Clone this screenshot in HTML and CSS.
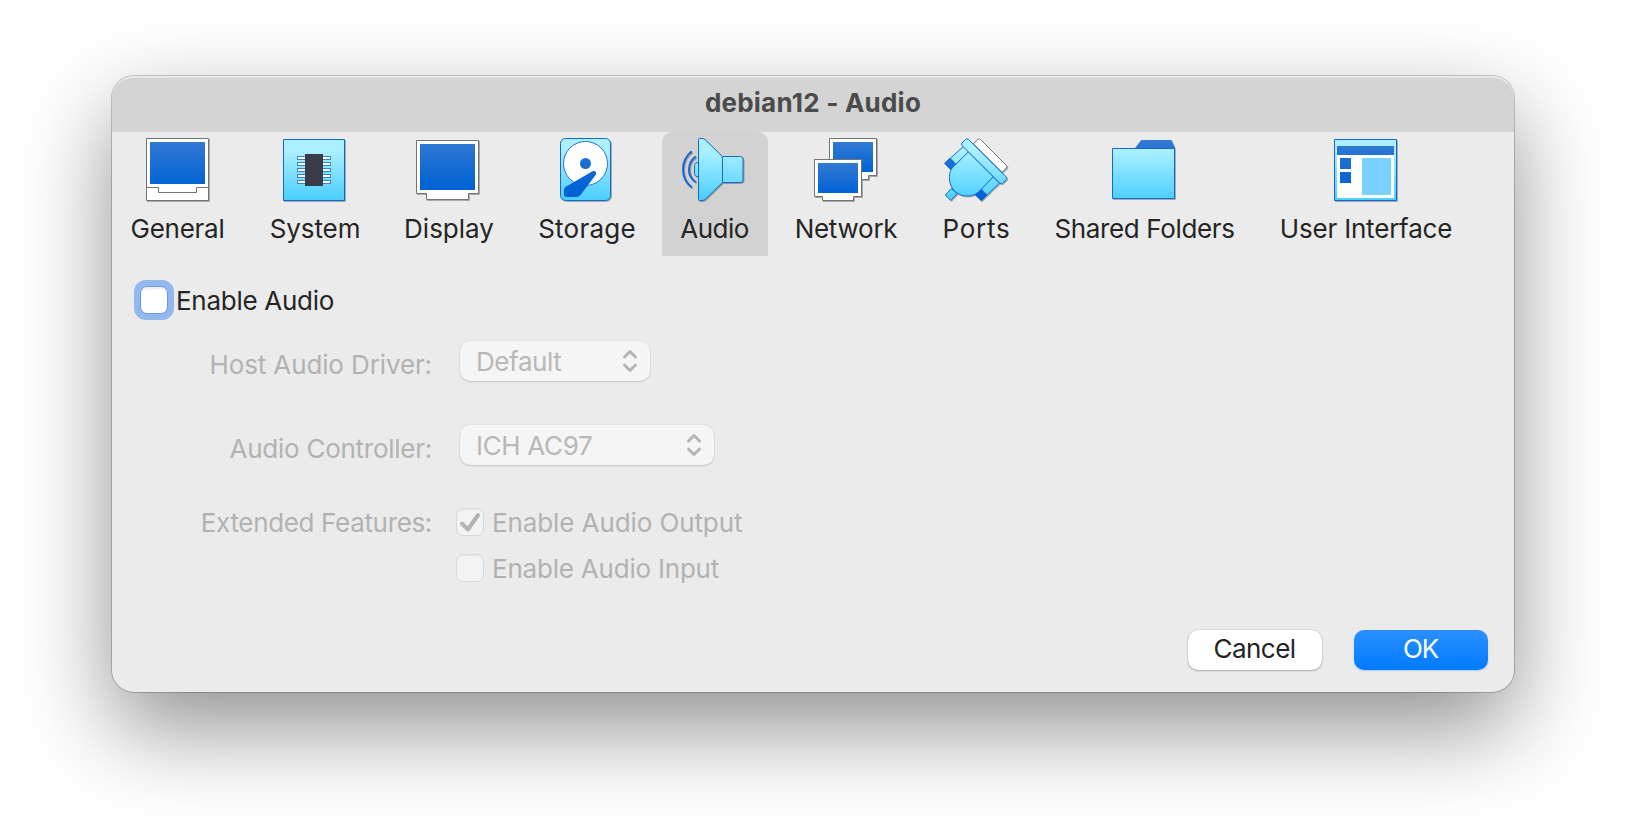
FILE: index.html
```html
<!DOCTYPE html>
<html lang="en">
<head>
<meta charset="utf-8">
<title>debian12 - Audio</title>
<link rel="stylesheet" href="styles.css">
</head>
<body>
<svg class="defs" aria-hidden="true">
  <defs>
    <linearGradient id="cyan" gradientUnits="userSpaceOnUse" x1="0" y1="0" x2="0" y2="64">
      <stop offset=".2" stop-color="#aaf0ff"/><stop offset=".95" stop-color="#4dcfff"/>
    </linearGradient>
    <linearGradient id="blue" gradientUnits="userSpaceOnUse" x1="0" y1="0" x2="0" y2="64">
      <stop offset=".05" stop-color="#3379d3"/><stop offset=".75" stop-color="#0062d4"/>
    </linearGradient>
    <linearGradient id="blue-near" gradientUnits="userSpaceOnUse" x1="0" y1="25" x2="0" y2="55">
      <stop offset="0" stop-color="#3379d3"/><stop offset="1" stop-color="#0062d4"/>
    </linearGradient>
    <linearGradient id="blue-far" gradientUnits="userSpaceOnUse" x1="0" y1="4" x2="0" y2="34">
      <stop offset="0" stop-color="#3379d3"/><stop offset="1" stop-color="#0062d4"/>
    </linearGradient>
  </defs>
</svg>
<main class="window">
  <header class="titlebar"><h1 class="title">debian12 - Audio</h1></header>
  <nav class="toolbar">
    <a class="tool general">
      <svg class="icon" viewBox="0 0 64 64">
        <path class="paper" d="M.5 .5h62v62H.5z"/>
        <path class="blue" d="M4 4h55v42H4z"/>
        <path class="line" d="M.5 49.5h12v5h38v-5h12"/>
      </svg>
      <span class="label">General</span>
    </a>
    <a class="tool system">
      <svg class="icon" viewBox="0 0 64 64">
        <path class="cyan" d="M1.5 1.5h61v61h-61z"/>
        <g class="pins">
          <rect x="15.5" y="18.5" width="33" height="3"/><rect x="15.5" y="24.5" width="33" height="3"/><rect x="15.5" y="30.5" width="33" height="3"/><rect x="15.5" y="36.5" width="33" height="3"/><rect x="15.5" y="42.5" width="33" height="3"/>
        </g>
        <path class="chip" d="M23 16h18v32H23z"/>
      </svg>
      <span class="label">System</span>
    </a>
    <a class="tool display">
      <svg class="icon" viewBox="0 0 64 64">
        <path class="paper" d="M.5 2.5h62v53h-10v6h-42v-6H.5z"/>
        <path class="blue" d="M4 6h55v46H4z"/>
      </svg>
      <span class="label">Display</span>
    </a>
    <a class="tool storage">
      <svg class="icon" viewBox="0 0 64 64">
        <rect class="cyan" x="6.5" y=".5" width="50" height="62" rx="5"/>
        <circle class="disc" cx="31.5" cy="25.5" r="22"/>
        <circle class="blue" cx="31.5" cy="25.5" r="5.5"/>
        <path class="blue" d="M38.5 33.2C40.5 32.2 43 34 42 36.5L28.5 54.5C26.5 57.5 24.5 59 21.500 59H12Q10 59 10 57V52.500C10 50 11.500 48.500 14 47.500Z"/>
      </svg>
      <span class="label">Storage</span>
    </a>
    <a class="tool audio selected">
      <svg class="icon" viewBox="0 0 64 64">
        <path class="cyan" d="M16.500 24.500h-1.500q-2.500 .5-2.500 3v8q0 2.500 2.500 3h1.500z"/>
        <path class="cyan" d="M16.500 1.500q0-1 1-1h2.500q2 0 3.500 1.500L40.500 18.500v26L23.500 61q-1.500 1.500-3.500 1.500h-2.500q-1 0-1-1z"/>
        <path class="cyan" d="M40.500 18.500h18q2.500 0 2.500 2.500v21q0 2.500-2.500 2.500h-18z"/>
        <path class="wave" d="M13.700 18.500Q7 23.500 7 31.400T13.700 44.300M9.700 13.300Q1 20.500 1 31.400T9.700 49.500"/>
      </svg>
      <span class="label">Audio</span>
    </a>
    <a class="tool network">
      <svg class="icon" viewBox="0 0 64 64">
        <path class="paper" d="M15.500 .5h47v37h-8v4h-31v-4h-8z"/>
        <path class="far" d="M19 4h40v30H19z"/>
        <path class="paper" d="M.5 21.500h47v37h-8v4h-31v-4h-8z"/>
        <path class="near" d="M4 25h40v30H4z"/>
      </svg>
      <span class="label">Network</span>
    </a>
    <a class="tool ports">
      <svg class="icon" viewBox="0 0 64 64">
        <path class="paper" d="M29.500 6L33.500 1.500Q35 .2 36.500 1.500L62.300 27.300Q63.500 28.700 62.300 30L58 34.300Z"/>
        <path class="cyan" d="M19.600 8.300L.8 25.300L6.700 31.600L24.800 14z"/>
        <path class="blue" d="M6 19.500L.2 25.300L6.700 31.800L12.500 26.300z"/>
        <path class="cyan" d="M49.300 39L55.500 45L37.300 62.600L31 56.400z"/>
        <path class="blue" d="M37 50.500L43.300 57L37.300 63L30.800 56.500z"/>
        <path class="cyan" d="M7.300 50.500L1.300 57L6.700 62.500L13.200 55.500z"/>
        <path class="cyan" d="M24.500 13.800L9.500 28.700C6 32 5.500 35 5.500 40.500C5.500 50 13 58 22.500 58C28.500 58 32 56.500 36 52.500L49.300 38.700z"/>
        <path class="cyan" d="M21.500 1.500Q23 0 24.500 1.500L62.300 39Q63.500 40.300 62.300 41.500L58.600 45.300Q57.300 46.500 56 45.300L18 7.500Q17 6 18 5z"/>
      </svg>
      <span class="label">Ports</span>
    </a>
    <a class="tool folders">
      <svg class="icon" viewBox="0 0 64 64">
        <path class="blue" d="M23 10L29.300 2H59.300L63 10z"/>
        <path class="cyan" d="M.5 10.500h62v50H.5z"/>
      </svg>
      <span class="label">Shared Folders</span>
    </a>
    <a class="tool interface">
      <svg class="icon" viewBox="0 0 64 64">
        <path class="cyan" d="M.5 1.500h62v61H.5z"/>
        <path class="white" d="M3 17h57v43H3z"/>
        <path class="blue" d="M3 8h57v9H3zM6 20h11v11H6zM6 34h11v11H6z"/>
        <path class="pane" d="M28 20h29v37H28z"/>
      </svg>
      <span class="label">User Interface</span>
    </a>
  </nav>
  <section class="page">
    <label class="enable"><span class="focus"><span class="box"></span></span><span class="enable-text">Enable Audio</span></label>
    <div class="form">
      <span class="name host">Host Audio Driver:</span>
      <div class="select driver"><span class="value">Default</span>
        <svg class="arrows" viewBox="0 0 16 24"><path d="M2.500 8L8 2.500L13.500 8M2.500 16L8 21.500L13.500 16"/></svg>
      </div>
      <span class="name controller">Audio Controller:</span>
      <div class="select chipset"><span class="value ich">ICH AC97</span>
        <svg class="arrows" viewBox="0 0 16 24"><path d="M2.500 8L8 2.500L13.500 8M2.500 16L8 21.500L13.500 16"/></svg>
      </div>
      <span class="name extended">Extended Features:</span>
      <div class="checks">
        <label class="check"><span class="box off"><svg class="tick" viewBox="0 0 28 28"><path d="M6 15.500L12 21.500L22 7"/></svg></span><span class="check-text out">Enable Audio Output</span></label>
        <label class="check"><span class="box off"></span><span class="check-text in">Enable Audio Input</span></label>
      </div>
    </div>
  </section>
  <footer class="actions">
    <button class="button cancel">Cancel</button>
    <button class="button ok">OK</button>
  </footer>
</main>
</body>
</html>
```
FILE: styles.css
```css
* { box-sizing: border-box; }
body {
  margin: 0;
  height: 840px;
  padding: 76px 112px 0;
  overflow: hidden;
  background: #fff;
  color: #252525;
  font: 26px/32px Inter, "Liberation Sans", sans-serif;
}
.defs { display: block; width: 0; height: 0; }
.window {
  display: flex;
  flex-direction: column;
  height: 616px;
  border-radius: 22px;
  background: #ebebeb;
  overflow: hidden;
  box-shadow: 0 0 0 1px rgba(0, 0, 0, .2), 0 36px 92px rgba(0, 0, 0, .44);
}
.titlebar {
  display: flex;
  justify-content: center;
  height: 56px;
  padding-top: 11px;
  background: #d4d4d4;
  border-radius: 22px 22px 0 0;
  box-shadow: inset 0 2px 0 -.5px #f0f0f0;
}
.title {
  margin: 0;
  color: #4b4b4b;
  font-size: 26px;
  font-weight: 700;
  line-height: 32px;
  letter-spacing: .22px;
}

.toolbar {
  display: grid;
  grid-template-columns: 132px 126px 126px 134px 106px 140px 104px 218px 208px;
  column-gap: 8px;
  height: 124px;
}
.tool {
  display: flex;
  flex-direction: column;
  align-items: center;
  gap: 11px;
  padding-top: 6px;
  white-space: nowrap;
}
.selected { background: #d2d2d2; border-radius: 10px 10px 0 0; }
.icon {
  display: block;
  flex: none;
  width: 64px;
  height: 64px;
  overflow: visible;
  filter: drop-shadow(1px 1px 0 rgba(0, 0, 0, .28));
}
.system .icon, .display .icon, .storage .icon, .audio .icon, .folders .icon { margin-right: 2px; }
.general .label { letter-spacing: -.25px; margin-right: 1px; }
.system .label { letter-spacing: -.08px; }
.storage .label { letter-spacing: .23px; }
.audio .label { letter-spacing: -.55px; margin-right: 1px; }
.network .label { letter-spacing: -.25px; }
.ports .label { letter-spacing: .8px; margin-left: 1px; }
.folders .label { letter-spacing: -.37px; margin-right: 1px; }
.interface .label { letter-spacing: -.2px; }

.paper { fill: #fff; stroke: #737373; }
.line { fill: none; stroke: #737373; }
.blue { fill: url(#blue); }
.near { fill: url(#blue-near); }
.far { fill: url(#blue-far); }
.cyan { fill: url(#cyan); stroke: #1469d4; }
.disc { fill: #fff; stroke: #2b73d3; }
.pins { fill: #fff; stroke: #3a82d0; }
.chip { fill: #393c47; }
.wave { fill: none; stroke: #1469d4; stroke-width: 2; }
.white { fill: #fff; }
.pane { fill: #78d1ff; }

.page { flex: 1; padding: 24px 0 0 22px; }
.enable { display: flex; gap: 2px; height: 40px; align-items: center; }
.enable-text { letter-spacing: -.28px; padding-top: 2px; }
.focus { padding: 6px; border-radius: 12px; background: #92b8ef; }
.box {
  display: block;
  width: 28px;
  height: 28px;
  border: 1px solid #6f9adb;
  border-radius: 7px;
  background: #fff;
  box-shadow: inset 0 2px 2px rgba(0, 0, 0, .08);
}
.form {
  display: grid;
  grid-template-columns: 298px auto;
  grid-template-rows: 40px 40px 74px;
  row-gap: 44px;
  column-gap: 28px;
  justify-content: start;
  margin-top: 21px;
  color: #b2b2b2;
}
.name { text-align: right; padding-top: 8px; white-space: nowrap; }
.host { letter-spacing: -.12px; }
.controller { letter-spacing: -.26px; }
.extended { letter-spacing: -.34px; padding-top: 0; margin-top: -2px; }
.select {
  display: flex;
  align-items: center;
  justify-content: space-between;
  height: 40px;
  padding: 0 12px 0 16px;
  border-radius: 10px;
  background: #f5f5f5;
  box-shadow: 0 0 1px rgba(0, 0, 0, .18), 0 1px 2px rgba(0, 0, 0, .14);
  color: #b8b8b8;
}
.driver { width: 190px; }
.chipset { width: 254px; }
.value { letter-spacing: -.42px; padding-top: 2px; }
.ich { letter-spacing: -.33px; }
.arrows { width: 16px; height: 24px; fill: none; stroke: #b5b5b5; stroke-width: 3; stroke-linecap: round; stroke-linejoin: round; }
.checks { display: flex; flex-direction: column; gap: 14px; margin: -3px 0 0 -4px; }
.check { display: flex; align-items: center; gap: 8px; height: 32px; }
.check-text { padding-top: 2px; }
.out { letter-spacing: -.1px; }
.in { letter-spacing: -.21px; }
.off { border-color: #d9d9d9; background: #f3f3f3; box-shadow: inset 0 1px 2px rgba(0, 0, 0, .06); }
.tick { display: block; width: 28px; height: 28px; margin: -1px; fill: none; stroke: #b3b3b3; stroke-width: 4; stroke-linecap: round; stroke-linejoin: round; }

.actions { display: flex; justify-content: flex-end; gap: 32px; padding: 0 26px 22px 0; }
.button {
  width: 134px;
  height: 40px;
  padding: 0 1px 2px 0;
  border: 0;
  border-radius: 10px;
  font: inherit;
}
.cancel {
  background: #fff;
  color: #252525;
  letter-spacing: -.54px;
  box-shadow: 0 0 1px rgba(0, 0, 0, .35), 0 1px 2px rgba(0, 0, 0, .25);
}
.ok {
  background: linear-gradient(#2a90ff, #007aff);
  color: #fff;
  letter-spacing: -1.200px;
  box-shadow: 0 1px 2px rgba(0, 122, 255, .25);
}
```
